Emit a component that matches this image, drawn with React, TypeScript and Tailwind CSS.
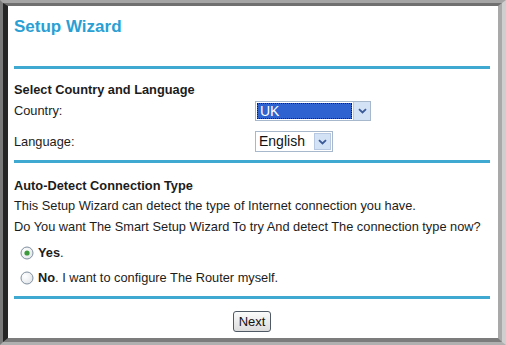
import React from "react";

const Rule = () => <div className="h-[3px] bg-[#3fa9d2] mr-[8px]" />;

const Radio = ({ checked }: { checked?: boolean }) => (
  <svg width="14" height="14" viewBox="0 0 14 14" className="shrink-0">
    <defs>
      <radialGradient id={checked ? "rg1" : "rg2"} cx="0.35" cy="0.35" r="0.8">
        <stop offset="0" stopColor="#ffffff" />
        <stop offset="1" stopColor="#dfe3e8" />
      </radialGradient>
    </defs>
    <circle cx="7" cy="7" r="6" fill={`url(#${checked ? "rg1" : "rg2"})`} stroke="#8090a0" strokeWidth="1" />
    {checked && <circle cx="7" cy="7" r="2.6" fill="#3c9a3c" />}
  </svg>
);

const Chevron = () => (
  <svg width="9" height="6" viewBox="0 0 9 6">
    <path d="M1 1.2 L4.5 4.5 L8 1.2" fill="none" stroke="#3a5a98" strokeWidth="1.8" />
  </svg>
);

export default function App() {
  return (
    <div className="w-[506px] h-[345px] bg-white font-['Liberation_Sans',Arial,sans-serif] text-[12.8px] text-[#1c1c1c]">
      <div className="h-full flex flex-col border-l-[3px] border-l-[#7a7a7a] border-t-[3px] border-t-[#a5a5a5] border-r-[4px] border-r-[#cfcfcf] border-b-[3px] border-b-[#b0b0b0]">
        <div className="flex-1 flex flex-col border-l-[5px] border-l-[#262626] border-t-[3px] border-t-[#707070] border-r-[4px] border-r-[#a9a9a9] border-b-[4px] border-b-[#7c7c7c] pl-[6px]">
          <div className="h-[40px] flex items-center">
            <h1 className="text-[17px] font-bold text-[#2a9fd4] leading-none">Setup Wizard</h1>
          </div>
          <div className="mt-[20px]">
            <Rule />
          </div>

          <div className="mt-[11px] h-[20px] flex items-center font-bold">Select Country and Language</div>
          <div className="mt-[1px] h-[20px] flex items-center">
            <span className="w-[241px]">Country:</span>
            <div className="flex h-[20px] w-[116px] border border-[#a7b7cc] bg-white">
              <div className="flex-1 m-[1px] bg-[#2e62d0] border border-dotted border-[#1a1a40] flex items-center pl-[2px] text-[14px] text-white">
                UK
              </div>
              <div className="w-[17px] bg-[#d4e2f6] border-l border-[#b6c8e2] flex items-center justify-center">
                <Chevron />
              </div>
            </div>
          </div>
          <div className="mt-[10px] h-[21px] flex items-center">
            <span className="w-[241px]">Language:</span>
            <div className="flex h-[21px] w-[78px] border border-[#a7b7cc] bg-white">
              <div className="flex-1 flex items-center pl-[3px] text-[14px] text-[#111]">English</div>
              <div className="w-[17px] m-[1px] bg-[#d4e2f6] border border-[#b6c8e2] flex items-center justify-center">
                <Chevron />
              </div>
            </div>
          </div>
          <div className="mt-[8px]">
            <Rule />
          </div>

          <div className="mt-[13px] h-[20px] flex items-center font-bold">Auto-Detect Connection Type</div>
          <div className="h-[20px] flex items-center">This Setup Wizard can detect the type of Internet connection you have.</div>
          <div className="mt-[1px] h-[20px] flex items-center">
            Do You want The Smart Setup Wizard To try And detect The connection type now?
          </div>
          <div className="mt-[6px] h-[20px] flex items-center gap-[4px] pl-[6px]">
            <Radio checked />
            <span>
              <b>Yes</b>.
            </span>
          </div>
          <div className="mt-[5px] h-[20px] flex items-center gap-[4px] pl-[6px]">
            <Radio />
            <span>
              <b>No</b>. I want to configure The Router myself.
            </span>
          </div>
          <div className="mt-[8px]">
            <Rule />
          </div>

          <div className="mt-[12px] flex justify-center pr-[8px]">
            <button className="h-[21px] px-[5px] rounded-[3px] border border-[#505a66] bg-gradient-to-b from-[#fbfbfb] to-[#dcdcdc] text-[13px] text-[#111] leading-none">
              Next
            </button>
          </div>
        </div>
      </div>
    </div>
  );
}
